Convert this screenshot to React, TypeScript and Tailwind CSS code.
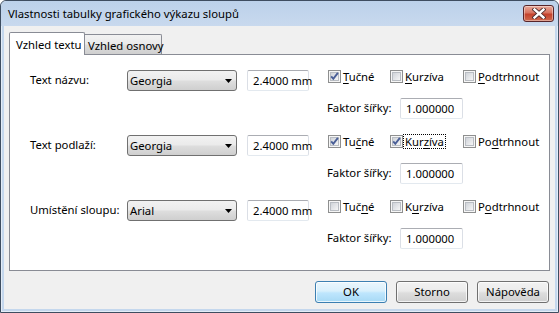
import React from "react";

type Opt = { text: string; u: number; checked?: boolean; focus?: boolean };

interface Group {
  label: string;
  font: string;
  opts: Opt[];
}

const groups: Group[] = [
  {
    label: "Text názvu:",
    font: "Georgia",
    opts: [
      { text: "Tučné", u: 0, checked: true },
      { text: "Kurzíva", u: 0 },
      { text: "Podtrhnout", u: 0 },
    ],
  },
  {
    label: "Text podlaží:",
    font: "Georgia",
    opts: [
      { text: "Tučné", u: 2, checked: true },
      { text: "Kurzíva", u: 3, checked: true, focus: true },
      { text: "Podtrhnout", u: 2 },
    ],
  },
  {
    label: "Umístění sloupu:",
    font: "Arial",
    opts: [
      { text: "Tučné", u: 3 },
      { text: "Kurzíva", u: 1 },
      { text: "Podtrhnout", u: 1 },
    ],
  },
];

function CheckBox({ checked }: { checked?: boolean }) {
  return (
    <svg width="13" height="13" viewBox="0 0 13 13" className="shrink-0">
      <defs>
        <linearGradient id="cbfill" x1="0" y1="0" x2="1" y2="1">
          <stop offset="0" stopColor="#cdd1d7" />
          <stop offset="1" stopColor="#f8f8f8" />
        </linearGradient>
      </defs>
      <rect x="0.5" y="0.5" width="12" height="12" fill="#f6f6f6" stroke="#8e8f8f" />
      <rect x="2.5" y="2.5" width="8" height="8" fill="url(#cbfill)" stroke="#b9bdc3" />
      {checked && (
        <path d="M3.2 6.4 L5.3 8.8 L9.9 2.8" fill="none" stroke="#4a5f97" strokeWidth="1.9" />
      )}
    </svg>
  );
}

// mnemonic underline on one letter
function Mnemonic({ text, u }: { text: string; u: number }) {
  return (
    <>
      {text.slice(0, u)}
      <span className="underline underline-offset-[2px]">{text[u]}</span>
      {text.slice(u + 1)}
    </>
  );
}

function Combo({ value }: { value: string }) {
  return (
    <div className="w-[110px] h-[21px] shrink-0 flex items-center justify-between pl-[2px] pr-[4px] rounded-[3px] border border-[#707070] bg-[linear-gradient(#f2f2f2,#ebebeb_45%,#dddddd_55%,#cfcfcf)]">
      <span>{value}</span>
      <svg width="7" height="4" viewBox="0 0 7 4">
        <polygon points="0,0 7,0 3.5,4" fill="#000" />
      </svg>
    </div>
  );
}

function TextBox({ value, w }: { value: string; w: string }) {
  return (
    <div
      className={`${w} h-[21px] shrink-0 flex items-center pl-[5px] rounded-[2px] bg-white border border-[#dbdfe6] border-t-[#abadb3] border-b-[#e3e9ef]`}
    >
      {value}
    </div>
  );
}

function Button({ label, def }: { label: string; def?: boolean }) {
  return (
    <div
      className={`w-[72px] h-[22px] flex items-center justify-center rounded-[3px] border shadow-[inset_0_0_0_1px_rgba(255,255,255,0.75)] ${
        def
          ? "border-[#3c7fb1] bg-[linear-gradient(#eaf6fd,#d9f0fc_45%,#bee6fd_55%,#a7d9f5)]"
          : "border-[#707070] bg-[linear-gradient(#f2f2f2,#ebebeb_45%,#dddddd_55%,#cfcfcf)]"
      }`}
    >
      {label}
    </div>
  );
}

export default function App() {
  return (
    <div className="w-[559px] h-[313px] flex flex-col rounded-t-[6px] border border-[#3e4d60] bg-[#c4d7ed] text-[11.3px] leading-none whitespace-nowrap text-black font-['Noto_Sans','Liberation_Sans',sans-serif] shadow-[inset_0_0_0_1px_rgba(255,255,255,0.55)] overflow-hidden">
      {/* Title bar */}
      <div className="h-[25px] flex items-start justify-between pl-[7px] pr-[4px] bg-[linear-gradient(#bcd1ea,#c8d9ee)] rounded-t-[5px]">
        <span className="mt-[7px]">Vlastnosti tabulky grafického výkazu sloupů</span>
        <div className="mt-[4px] w-[31px] h-[17px] flex items-center justify-center rounded-[3px] border border-[#58252a] bg-[linear-gradient(#e9a99a,#d7735f_45%,#c4422c_55%,#cf6a4e)] shadow-[inset_0_0_0_1px_rgba(255,255,255,0.4)]">
          <svg width="14" height="11" viewBox="0 0 14 11">
            <path d="M2.5 1.5 L11.5 9.5 M11.5 1.5 L2.5 9.5" stroke="#4a2a2a" strokeWidth="4.2" strokeLinecap="square" />
            <path d="M2.5 1.5 L11.5 9.5 M11.5 1.5 L2.5 9.5" stroke="#fff" strokeWidth="2.4" strokeLinecap="square" />
          </svg>
        </div>
      </div>

      {/* Client */}
      <div className="mx-[3px] mb-[3px] flex-1 flex flex-col bg-[#f0f0f0]">
        {/* Tabs */}
        <div className="pt-[6px] pl-[5px] h-[28px] flex items-end">
          <div className="relative z-10 w-[76px] h-[23px] -mb-px flex items-start pl-[6px] pt-[6px] bg-white border border-b-0 border-[#898c95] rounded-t-[2px]">
            Vzhled textu
          </div>
          <div className="w-[77px] h-[20px] flex items-start pl-[3px] pt-[5px] border border-l-0 border-b-0 border-[#898c95] rounded-tr-[2px] bg-[linear-gradient(#f2f2f2,#ebebeb_45%,#dddddd_55%,#cfcfcf)]">
            Vzhled osnovy
          </div>
        </div>

        {/* Tab page */}
        <div className="mx-[5px] h-[217px] pt-[15px] border border-[#898c95] bg-white">
          {groups.map((g) => (
            <div key={g.label} className="flex items-start h-[49px] mb-[16px]">
              <div className="ml-[20px] w-[97px] h-[20px] shrink-0 flex items-center">{g.label}</div>
              <Combo value={g.font} />
              <div className="ml-[10px]">
                <TextBox value="2.4000 mm" w="w-[62px]" />
              </div>
              <div className="ml-[19px] -mt-[1px] flex flex-col">
                <div className="h-[15px] flex items-center">
                  {g.opts.map((o, i) => (
                    <div
                      key={o.text}
                      className={`flex items-center ${i === 0 ? "w-[62px]" : i === 1 ? "w-[73px]" : ""}`}
                    >
                      <CheckBox checked={o.checked} />
                      <span className={`px-px py-[1px] border border-dotted ${o.focus ? "border-black" : "border-transparent"}`}>
                        <Mnemonic text={o.text} u={o.u} />
                      </span>
                    </div>
                  ))}
                </div>
                <div className="mt-[14px] -ml-px h-[21px] flex items-center">
                  <span className="w-[73px] -mt-[2px]">Faktor šířky:</span>
                  <TextBox value="1.000000" w="w-[63px]" />
                </div>
              </div>
            </div>
          ))}
        </div>

        {/* Buttons */}
        <div className="mt-[10px] pr-[6px] flex justify-end gap-[9px]">
          <Button label="OK" def />
          <Button label="Storno" />
          <Button label="Nápověda" />
        </div>
      </div>
    </div>
  );
}
